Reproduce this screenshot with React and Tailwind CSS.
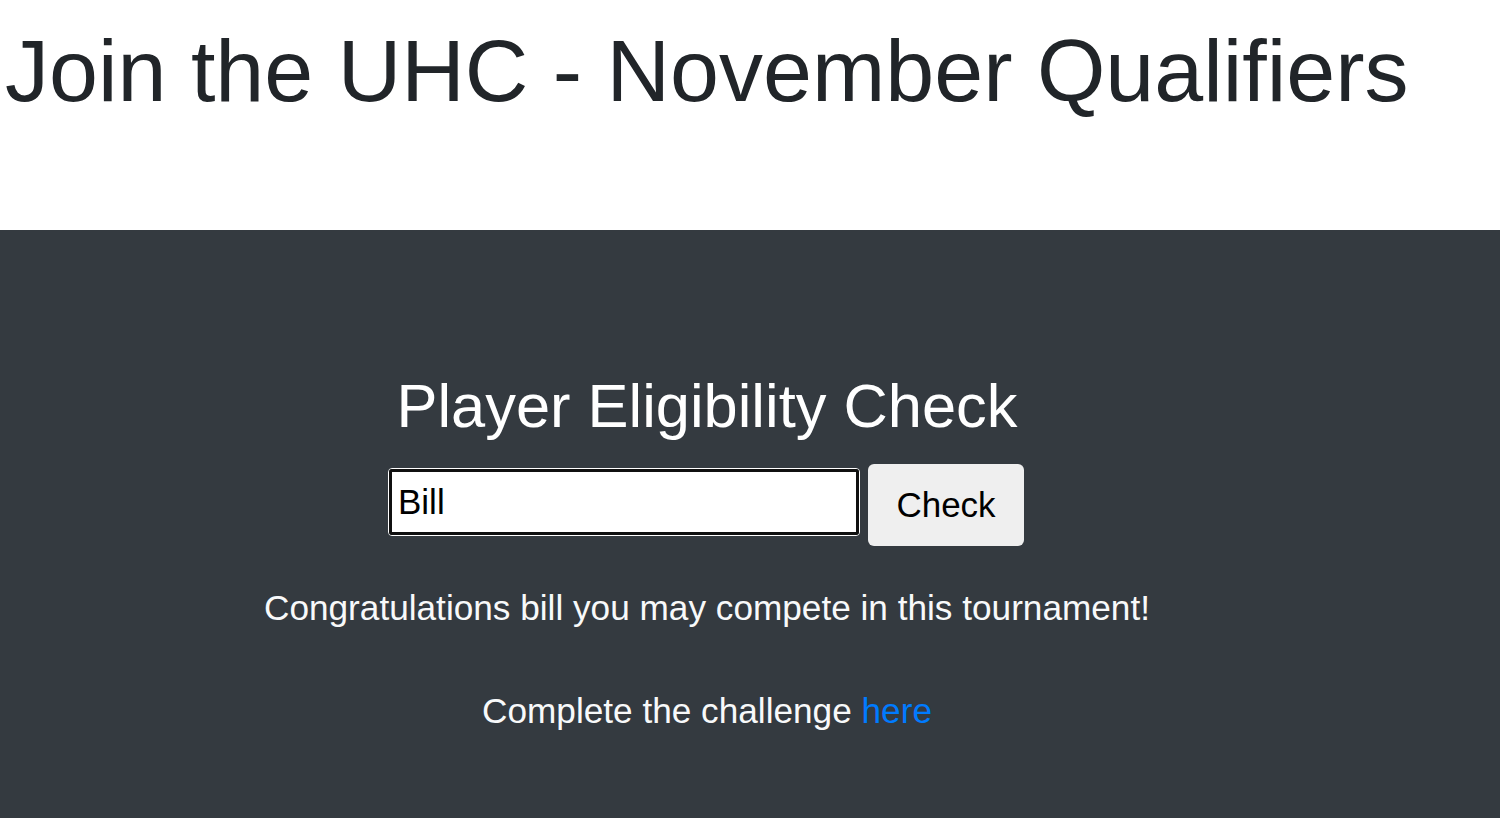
export default function App() {
  return (
    <div className="min-h-[818px] bg-white" style={{ fontFamily: '"Liberation Sans", Arial, sans-serif' }}>
      <div className="h-[230px] pt-[18px]">
        <h1 className="text-[88px] leading-[1.2] text-[#212529] font-normal pl-[5px]">
          Join the UHC - November Qualifiers
        </h1>
      </div>
      <div className="bg-[#343a40] min-h-[588px]">
        <div className="w-[1414px] pt-[140px] text-center">
          <h2 className="text-[61.4px] leading-[72px] text-white font-normal">Player Eligibility Check</h2>
          <form className="mt-[22px] flex items-center justify-center gap-[8px] pr-[2px]" onSubmit={(e) => e.preventDefault()}>
            <div className="rounded-[4px] border border-white mb-[6px]">
              <input
                type="text"
                defaultValue="Bill"
                className="w-[470px] h-[66px] bg-white border-[3px] border-[#101010] rounded-[3px] px-[6px] text-[35px] text-black outline-none"
              />
            </div>
            <button
              type="button"
              className="w-[156px] h-[82px] bg-[#efefef] rounded-[6px] text-[35px] text-black"
            >
              Check
            </button>
          </form>
          <p className="mt-[36px] text-[35.2px] leading-[52px] text-[#f8f9fa]">
            Congratulations bill you may compete in this tournament!
          </p>
          <p className="mt-[51px] text-[35.2px] leading-[52px] text-[#f8f9fa]">
            Complete the challenge <a href="#" className="text-[#007bff]">here</a>
          </p>
        </div>
      </div>
    </div>
  );
}
